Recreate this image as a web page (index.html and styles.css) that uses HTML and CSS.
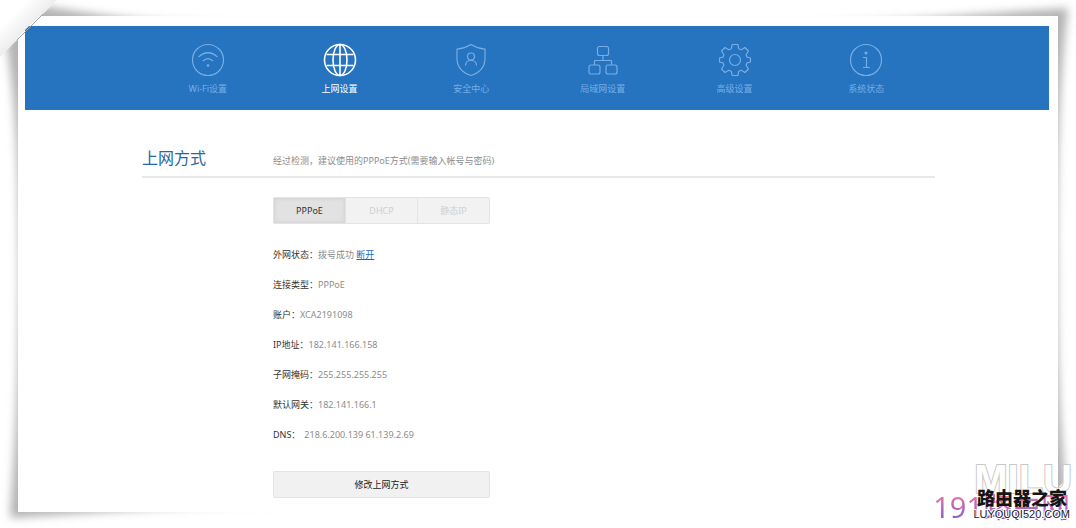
FILE: index.html
```
<!DOCTYPE html>
<html lang="zh-CN">
<head>
<meta charset="utf-8">
<title>上网设置</title>
<link rel="stylesheet" href="styles.css">
</head>
<body>
<div class="frame">
  <svg class="frame-shadow" viewBox="0 0 1076 528" preserveAspectRatio="none" aria-hidden="true">
    <defs>
      <filter id="soft" x="-5%" y="-5%" width="110%" height="110%"><feGaussianBlur stdDeviation="4"/></filter>
      <clipPath id="corners"><path d="M57 0H1076V468L1058 488V528H0V57Z"/></clipPath>
      <linearGradient id="curl" gradientUnits="userSpaceOnUse" x1="14" y1="14" x2="29" y2="29"><stop offset="0" stop-color="#fff"/><stop offset="1" stop-color="#ececec"/></linearGradient>
    </defs>
    <path fill="url(#curl)" d="M0 0H57L0 57Z"/>
    <g clip-path="url(#corners)">
      <path filter="url(#soft)" fill="#b4b4b4" d="M0 0L56 8C120 18 160 24 300 26H740C860 25 980 13 1068 8C1062 60 1057 120 1057 260C1057 360 1060 430 1067 490L1050 500H400C220 502 110 512 10 518C15 450 19 390 19 260C19 150 15 100 6 40Z"/>
    </g>
  </svg>
  <div class="sheet">
    <header class="topbar">
      <nav class="nav" aria-label="主导航">
        <a class="nav-item" href="#wifi">
          <svg class="icon" viewBox="0 0 34 34"><circle cx="17" cy="17" r="15.500"/><path d="M7.500 14Q17 5.500 26.500 14M12 18Q17 13 22 18"/><circle class="dot" cx="17" cy="22.500" r="1.300"/></svg>
          <span>Wi-Fi设置</span>
        </a>
        <a class="nav-item active" href="#wan" aria-current="page">
          <svg class="icon" viewBox="0 0 34 34"><circle cx="17" cy="17" r="15.500"/><ellipse cx="17" cy="17" rx="7" ry="15.500"/><path d="M17 1.500V32.500M3.500 11.500H30.500M3.500 22.500H30.500"/></svg>
          <span>上网设置</span>
        </a>
        <a class="nav-item" href="#security">
          <svg class="icon" viewBox="0 0 34 34"><path d="M17 1.500Q23.500 5.500 31 6.200V15.500C31 24 26 29.500 17 32.500C8 29.500 3 24 3 15.500V6.200Q10.500 5.500 17 1.500Z"/><circle cx="17" cy="13.500" r="3.500"/><path d="M11.500 22.500C11.500 15.800 22.500 15.800 22.500 22.500"/></svg>
          <span>安全中心</span>
        </a>
        <a class="nav-item" href="#lan">
          <svg class="icon" viewBox="0 0 34 34"><rect x="11.500" y="3.500" width="11" height="9" rx="2"/><rect x="3" y="22" width="11" height="9" rx="2"/><rect x="20" y="22" width="11" height="9" rx="2"/><path d="M17 12.500V17.500M8.500 22V17.500H25.500V22"/></svg>
          <span>局域网设置</span>
        </a>
        <a class="nav-item" href="#advanced">
          <svg class="icon" viewBox="0 0 34 34"><path d="M14.200 1.500H19.800L20.800 5.800L23.200 6.800L27 4.500L30.500 8L28.100 11.800L29 14.200L32.500 15V19L29 19.900L28.100 22.200L30.500 26L27 29.500L23.200 27.200L20.800 28.200L19.800 32.500H14.200L13.200 28.200L10.800 27.200L7 29.500L3.500 26L5.900 22.200L5 19.900L1.500 19V15L5 14.200L5.900 11.800L3.500 8L7 4.500L10.800 6.800L13.200 5.800Z"/><circle cx="17" cy="17" r="5.500"/></svg>
          <span>高级设置</span>
        </a>
        <a class="nav-item" href="#status">
          <svg class="icon" viewBox="0 0 34 34"><circle cx="17" cy="17" r="15.500"/><path d="M14 14.500H17.500V24M14 24.500H21"/><circle class="dot" cx="17" cy="10" r="1.500"/></svg>
          <span>系统状态</span>
        </a>
      </nav>
    </header>
    <main class="content">
      <div class="heading">
        <h1>上网方式</h1>
        <p>经过检测，建议使用的PPPoE方式(需要输入帐号与密码)</p>
      </div>
      <section class="panel">
        <div class="tabs">
          <button class="tab selected" type="button">PPPoE</button>
          <button class="tab" type="button">DHCP</button>
          <button class="tab" type="button">静态IP</button>
        </div>
        <dl class="details">
          <div><dt>外网状态：</dt><dd>拨号成功 <a href="#disconnect">断开</a></dd></div>
          <div><dt>连接类型：</dt><dd>PPPoE</dd></div>
          <div><dt>账户：</dt><dd>XCA2191098</dd></div>
          <div><dt>IP地址：</dt><dd>182.141.166.158</dd></div>
          <div><dt>子网掩码：</dt><dd>255.255.255.255</dd></div>
          <div><dt>默认网关：</dt><dd>182.141.166.1</dd></div>
          <div class="servers"><dt>DNS：</dt><dd>218.6.200.139 61.139.2.69</dd></div>
        </dl>
        <button class="modify" type="button">修改上网方式</button>
      </section>
    </main>
  </div>
  <svg class="curl-edge" viewBox="0 0 60 60" aria-hidden="true"><path d="M0 0H40L0 40Z" fill="#fff" fill-opacity="0"/><path d="M17 40L43 14" stroke="#9aa4ac" stroke-width="1"/></svg>
  <div class="mark mark-outline">MILU</div>
  <div class="mark mark-gradient">191路由网</div>
  <div class="mark mark-name">路由器之家</div>
  <div class="mark mark-domain">LUYOUQI520.COM</div>
</div>
</body>
</html>
```
FILE: styles.css
```
* { box-sizing: border-box; }
body {
  margin: 0;
  background: #fff;
  color: #333;
  font: 9px/16px "Noto Sans", "Noto Sans CJK SC", sans-serif;
}
h1, p, dl, dd { margin: 0; }
button { font: inherit; padding: 0; }

.frame {
  position: relative;
  display: flex;
  min-height: 100vh;
  padding: 16px 18px;
  overflow: hidden;
}
.frame-shadow {
  position: absolute;
  inset: 0;
  width: 100%;
  height: 100%;
}
.curl-edge {
  position: absolute;
  top: 0;
  left: 0;
  width: 60px;
  height: 60px;
}
.sheet {
  position: relative;
  flex: 1;
  padding: 10px 9px 0 7px;
  background: #fff;
  clip-path: polygon(22px 0, 100% 0, 100% 100%, 0 100%, 0 22px, 7px 14px, 11px 10px);
}

.topbar {
  padding: 17px 117px 12px;
  background: #2673c0;
}
.nav { display: flex; }
.nav-item {
  flex: 1;
  display: flex;
  flex-direction: column;
  align-items: center;
  gap: 4px;
  color: #76aee4;
  text-decoration: none;
}
.nav-item.active { color: #fff; }
.icon {
  width: 34px;
  height: 34px;
  fill: none;
  stroke: currentColor;
  stroke-width: 1.2;
  stroke-linejoin: round;
}
.active .icon { stroke-width: 1.6; }
.icon .dot { fill: currentColor; stroke: none; }
.nav-item span { padding-bottom: 1px; }

.content { padding: 36px 114px 0 117px; }
.heading {
  display: flex;
  align-items: baseline;
  padding-bottom: 6px;
  border-bottom: 2px solid #e8e8e8;
}
h1 {
  width: 131px;
  color: #2468a5;
  font-size: 16px;
  font-weight: 400;
  line-height: 24px;
}
.heading p { color: #8c8c8c; }

.panel {
  display: flex;
  flex-direction: column;
  align-items: flex-start;
  padding: 19px 0 0 131px;
}
.tabs {
  display: flex;
  width: 217px;
  height: 27px;
  border: 1px solid #e3e3e3;
  border-radius: 2px;
  background: #f2f2f2;
}
.tab {
  flex: 1;
  border: 0;
  border-right: 1px solid #e3e3e3;
  background: none;
  color: #cfcfcf;
}
.tab:last-child { border-right: 0; }
.tab.selected {
  background: #e2e2e2;
  box-shadow: inset 0 0 4px #cccccc;
  color: #333;
}
.details { padding: 16px 0 21px; }
.details div {
  display: flex;
  height: 30px;
  align-items: center;
}
.details dd { color: #8c8c8c; }
.details .servers { gap: 4px; }
.details a { color: #1c66c0; }
.modify {
  width: 217px;
  height: 27px;
  border: 1px solid #e3e3e3;
  border-radius: 2px;
  background: #f1f1f1;
  color: #222;
}

.mark {
  position: absolute;
  white-space: nowrap;
}
.mark-outline {
  right: 4px;
  bottom: 25px;
  color: #fff;
  font: 700 40px/48px "Liberation Sans", sans-serif;
  -webkit-text-stroke: 2px #c8c8c8;
  paint-order: stroke fill;
}
.mark-gradient {
  right: 6px;
  bottom: 1px;
  background: linear-gradient(#e070a8 25%, #8a5cd0 80%);
  background-clip: text;
  -webkit-background-clip: text;
  color: transparent;
  font: 400 29px/40px "Noto Sans", "Noto Sans CJK SC", sans-serif;
}
.mark-name {
  right: 9px;
  bottom: 20px;
  color: #151515;
  font: 900 18px/22px "Noto Sans CJK SC", sans-serif;
}
.mark-domain {
  right: 6px;
  bottom: 7px;
  color: #1a1a2a;
  font: 11px/14px "Liberation Sans", sans-serif;
  -webkit-text-stroke: 2px #fff;
  paint-order: stroke fill;
}
```
